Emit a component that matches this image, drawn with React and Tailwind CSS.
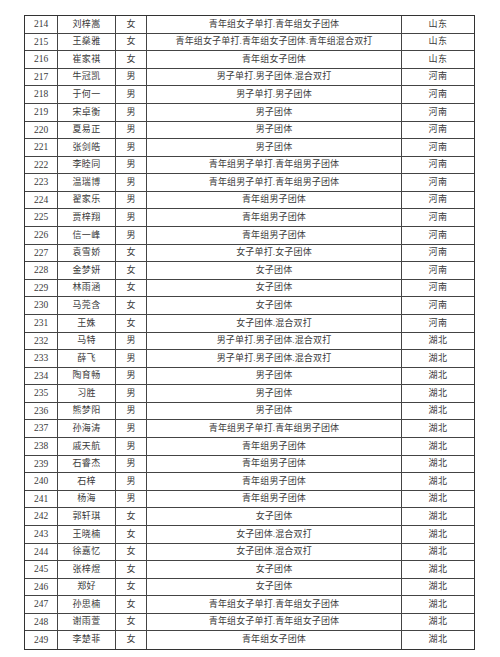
import React from "react";

const rows = [
  ["214", "刘梓嵩", "女", "青年组女子单打.青年组女子团体", "山东"],
  ["215", "王燊雅", "女", "青年组女子单打.青年组女子团体.青年组混合双打", "山东"],
  ["216", "崔家祺", "女", "青年组女子团体", "山东"],
  ["217", "牛冠凯", "男", "男子单打.男子团体.混合双打", "河南"],
  ["218", "于何一", "男", "男子单打.男子团体", "河南"],
  ["219", "宋卓衡", "男", "男子团体", "河南"],
  ["220", "夏易正", "男", "男子团体", "河南"],
  ["221", "张剑皓", "男", "男子团体", "河南"],
  ["222", "李睦同", "男", "青年组男子单打.青年组男子团体", "河南"],
  ["223", "温瑞博", "男", "青年组男子单打.青年组男子团体", "河南"],
  ["224", "翟家乐", "男", "青年组男子团体", "河南"],
  ["225", "贾梓翔", "男", "青年组男子团体", "河南"],
  ["226", "信一峰", "男", "青年组男子团体", "河南"],
  ["227", "袁雪娇", "女", "女子单打.女子团体", "河南"],
  ["228", "金梦妍", "女", "女子团体", "河南"],
  ["229", "林雨涵", "女", "女子团体", "河南"],
  ["230", "马莞含", "女", "女子团体", "河南"],
  ["231", "王姝", "女", "女子团体.混合双打", "河南"],
  ["232", "马特", "男", "男子单打.男子团体.混合双打", "湖北"],
  ["233", "薛飞", "男", "男子单打.男子团体.混合双打", "湖北"],
  ["234", "陶育畅", "男", "男子团体", "湖北"],
  ["235", "习胜", "男", "男子团体", "湖北"],
  ["236", "熊梦阳", "男", "男子团体", "湖北"],
  ["237", "孙海涛", "男", "青年组男子单打.青年组男子团体", "湖北"],
  ["238", "戚天航", "男", "青年组男子团体", "湖北"],
  ["239", "石睿杰", "男", "青年组男子团体", "湖北"],
  ["240", "石梓", "男", "青年组男子团体", "湖北"],
  ["241", "杨海", "男", "青年组男子团体", "湖北"],
  ["242", "郭轩琪", "女", "女子团体", "湖北"],
  ["243", "王晓楠", "女", "女子团体.混合双打", "湖北"],
  ["244", "徐嘉忆", "女", "女子团体.混合双打", "湖北"],
  ["245", "张梓煜", "女", "女子团体", "湖北"],
  ["246", "郑好", "女", "女子团体", "湖北"],
  ["247", "孙思楠", "女", "青年组女子单打.青年组女子团体", "湖北"],
  ["248", "谢雨萱", "女", "青年组女子单打.青年组女子团体", "湖北"],
  ["249", "李楚菲", "女", "青年组女子团体", "湖北"],
];

const TOTAL = 633;

export default function App() {
  return (
    <div
      className="w-[500px] h-[657px] bg-white pt-[15px] pl-[24px] text-[#3a3a3a]"
      style={{ fontFamily: '"Liberation Serif", "Noto Sans CJK SC", serif' }}
    >
      <div className="w-[451px] border border-[#333] flex flex-col">
        {rows.map((r, i) => {
          const h =
            Math.round(((i + 1) * TOTAL) / rows.length) -
            Math.round((i * TOTAL) / rows.length);
          const last = i === rows.length - 1;
          return (
            <div
              key={r[0]}
              className={`flex ${last ? "" : "border-b border-[#444]"}`}
              style={{ height: h }}
            >
              <div className="w-[33px] shrink-0 border-r border-[#444] flex items-center justify-center text-[9.5px]">
                {r[0]}
              </div>
              <div className="w-[58px] shrink-0 border-r border-[#444] flex items-center justify-center text-[9px] tracking-[0.3px]">
                {r[1]}
              </div>
              <div className="w-[31px] shrink-0 border-r border-[#444] flex items-center justify-center text-[9px]">
                {r[2]}
              </div>
              <div className="w-[255px] shrink-0 border-r border-[#444] flex items-center justify-center text-[9px] tracking-[0.15px]">
                {r[3]}
              </div>
              <div className="flex-1 flex items-center justify-center text-[9px] tracking-[0.5px]">
                {r[4]}
              </div>
            </div>
          );
        })}
      </div>
    </div>
  );
}
